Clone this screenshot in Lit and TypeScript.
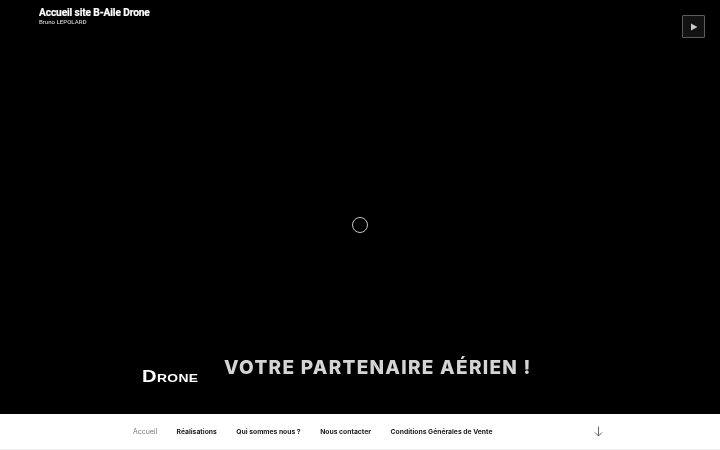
import { LitElement, html, css } from "lit";
import { customElement } from "lit/decorators.js";

@customElement("app-root")
export class AppRoot extends LitElement {
  static styles = css`
    :host { display: block; width: 720px; height: 450px; overflow: hidden; background: #fff; }
    .page { display: flex; flex-direction: column; height: 450px; }
    .hero { position: relative; flex: none; height: 414px; background: #000; display: flex; flex-direction: column; justify-content: space-between; }
    .top { display: flex; justify-content: space-between; align-items: flex-start; padding: 6px 15px 0 39px; }
    .brand { display: flex; flex-direction: column; will-change: transform; }
    .title { font: 700 10.2px/13px Roboto, sans-serif; color: #fff; letter-spacing: -0.13px; -webkit-text-stroke: 0.2px #fff; }
    .sub { font: 400 6.1px/5px Roboto, sans-serif; color: #e4e4e4; }
    .play { box-sizing: border-box; width: 23px; height: 23px; margin-top: 9px; border: 1px solid #5c5c5c; border-radius: 1px; background: #121212; display: flex; align-items: center; justify-content: center; }
    .play svg { display: block; }
    .spinner { position: absolute; left: 352px; top: 217px; box-sizing: border-box; width: 16px; height: 16px; border: 1.4px solid #c4c4c4; border-radius: 50%; }
    .slogan { display: flex; align-items: flex-end; padding: 0 0 29px 142px; gap: 25px; will-change: transform; }
    .drone { display: block; width: 57px; font: 700 16px/16px "Liberation Sans", sans-serif; font-variant: small-caps; color: #fff; letter-spacing: 0.3px; transform: scaleX(1.26); transform-origin: left center; }
    .tag { font: 800 19px/24px "Inter", sans-serif; color: #d4d4d4; letter-spacing: 1.28px; margin-bottom: 5px; }
    nav { flex: 1; box-sizing: border-box; display: flex; align-items: center; padding: 0 117px 0 133px; background: #fff; border-bottom: 1px solid #eee; font: 700 6.78px/12px "Inter", sans-serif; color: #222; }
    .links { display: flex; flex: 1; gap: 19.5px; will-change: transform; }
    .current { color: #767676; font-weight: 400; font-size: 6.9px; }
    nav svg { display: block; }
  `;

  render() {
    return html`
      <div class="page">
        <div class="hero">
          <div class="top">
            <div class="brand">
              <div class="title">Accueil site B-Aile Drone</div>
              <div class="sub">Bruno LEPOLARD</div>
            </div>
            <div class="play">
              <svg width="8" height="8" viewBox="0 0 8 8"><path d="M1 0.5 L7.5 4 L1 7.5 Z" fill="#c8c8c8"/></svg>
            </div>
          </div>
          <div class="spinner"></div>
          <div class="slogan">
            <span class="drone">Drone</span>
            <span class="tag">VOTRE PARTENAIRE AÉRIEN !</span>
          </div>
        </div>
        <nav>
          <div class="links">
            <span class="current">Accueil</span>
            <span>Réalisations</span>
            <span>Qui sommes nous ?</span>
            <span>Nous contacter</span>
            <span>Conditions Générales de Vente</span>
          </div>
          <svg width="9" height="11" viewBox="0 0 9 11" fill="none" stroke="#555" stroke-width="0.9"><path d="M4.5 0.5 V10 M1 6.5 L4.5 10 L8 6.5"/></svg>
        </nav>
      </div>
    `;
  }
}
